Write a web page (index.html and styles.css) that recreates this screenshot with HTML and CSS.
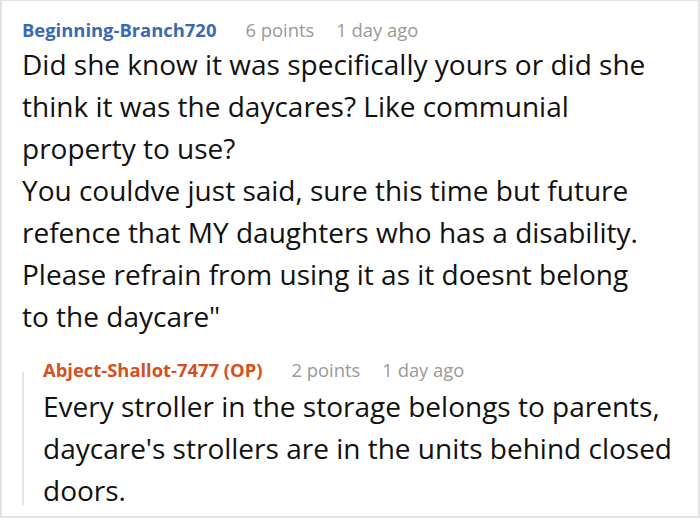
FILE: index.html
```html
<!DOCTYPE html>
<html>
<head>
<meta charset="utf-8">
<link rel="stylesheet" href="styles.css">
</head>
<body>
<div class="card">
  <div class="comment">
    <div class="meta">
      <span class="author">Beginning-Branch720</span>
      <span class="info">6 points</span>
      <span class="info">1 day ago</span>
    </div>
    <div class="body">
      <p>Did she know it was specifically yours or did she think it was the daycares? Like communial property to use?</p>
      <p>You couldve just said, sure this time but future refence that MY daughters who has a disability. Please refrain from using it as it doesnt belong to the daycare"</p>
    </div>
    <div class="reply">
      <div class="meta">
        <span class="author op">Abject-Shallot-7477 (OP)</span>
        <span class="info">2 points</span>
        <span class="info">1 day ago</span>
      </div>
      <div class="body">
        <p>Every stroller in the storage belongs to parents, daycare's strollers are in the units behind closed doors.</p>
      </div>
    </div>
  </div>
</div>
</body>
</html>
```

FILE: styles.css
```css
html, body {
  margin: 0;
  padding: 0;
  background: #ffffff;
}
body {
  font-family: "Open Sans", "Noto Sans", sans-serif;
  width: 700px;
  height: 520px;
  overflow: hidden;
}
.card {
  box-sizing: border-box;
  width: 700px;
  height: 518px;
  border: 2px solid #e4e4e4;
  border-top-width: 1px;
  padding: 14px 20px 0 20px;
}
.meta {
  display: flex;
  gap: 22px;
  font-size: 18.4px;
  line-height: 30px;
  align-items: baseline;
}
.author {
  font-weight: 700;
  color: #3a6ab4;
  margin-right: 7px;
}
.author.op {
  color: #d4501c;
}
.info {
  color: #999999;
}
.body {
  font-size: 28px;
  line-height: 42px;
  color: #111111;
}
.comment > .body {
  margin-top: -2px;
  padding-right: 26px;
}
.body p {
  margin: 0;
}
.reply {
  position: relative;
  margin-top: 18px;
  padding-left: 21px;
}
.reply::before {
  content: "";
  position: absolute;
  left: 0;
  top: 17px;
  bottom: 6px;
  width: 2px;
  background: #e6e6e6;
}
```
